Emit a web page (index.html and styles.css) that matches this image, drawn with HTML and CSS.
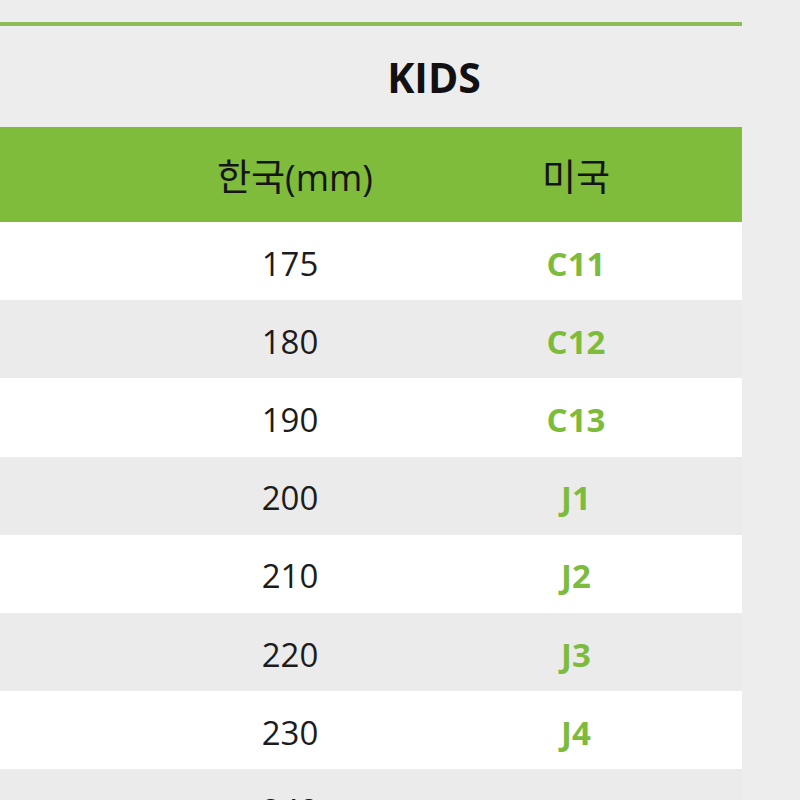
FILE: index.html
```html
<!DOCTYPE html>
<html lang="ko">
<head>
<meta charset="utf-8">
<link rel="stylesheet" href="styles.css">
</head>
<body>
<div class="page">
  <div class="rule"></div>
  <h1 class="title">KIDS</h1>
  <div class="table">
    <div class="row head"><span></span><span class="kr kr-mm">한국<span class="lat">(mm)</span></span><span class="kr">미국</span></div>
    <div class="row"><span></span><span class="mm">175</span><span class="us">C11</span></div>
    <div class="row alt"><span></span><span class="mm">180</span><span class="us">C12</span></div>
    <div class="row"><span></span><span class="mm">190</span><span class="us">C13</span></div>
    <div class="row alt"><span></span><span class="mm">200</span><span class="us">J1</span></div>
    <div class="row"><span></span><span class="mm">210</span><span class="us">J2</span></div>
    <div class="row alt"><span></span><span class="mm">220</span><span class="us">J3</span></div>
    <div class="row"><span></span><span class="mm">230</span><span class="us">J4</span></div>
    <div class="row alt"><span></span><span class="mm">240</span><span class="us">J5</span></div>
  </div>
</div>
</body>
</html>
```
FILE: styles.css
```css
html, body {
  margin: 0;
  padding: 0;
  background: #ededed;
  overflow: hidden;
}
.page {
  width: 742px;
  padding-top: 22px;
  font-family: "Open Sans", "Noto Sans CJK KR", sans-serif;
  color: #1c1c1c;
}
.rule {
  height: 4px;
  background: #8dbd58;
}
.title {
  margin: 0;
  height: 101px;
  display: flex;
  align-items: center;
  justify-content: center;
  padding-left: 126px;
  box-sizing: border-box;
  font-family: "Open Sans", sans-serif;
  font-weight: 700;
  font-size: 41px;
  letter-spacing: 0;
  color: #111;
}
.table {
  display: flex;
  flex-direction: column;
}
.row {
  display: grid;
  grid-template-columns: 147px 286px 286px 1fr;
  height: 78.2px;
  align-items: center;
  background: #ffffff;
}
.row.alt {
  background: #ebebeb;
}
.row.head {
  height: 95px;
  background: #80bc3b;
}
.row > span {
  text-align: center;
  padding-top: 4px;
}
.row > .kr {
  font-family: "Noto Sans CJK KR", sans-serif;
  font-size: 37px;
  font-weight: 400;
  color: #151515;
  padding-top: 0;
}
.row > .kr-mm {
  padding-left: 10px;
}
.kr .lat {
  font-family: "Open Sans", sans-serif;
  font-size: 36px;
}
.mm {
  font-size: 33px;
  font-weight: 400;
}
.us {
  font-size: 33px;
  font-weight: 700;
  color: #7dbb3c;
}
```
